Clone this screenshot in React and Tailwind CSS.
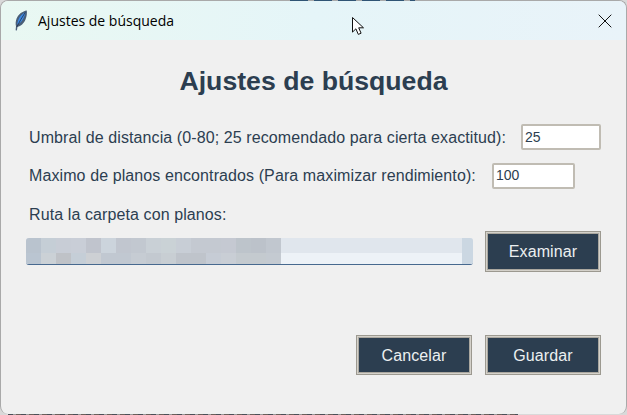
const TOP = ["#b9c3ce","#c5ced6","#c8cdd6","#c9ced7","#c0c4cd","#ccd4dc","#c1c6cf","#c2c8d0","#c9d0d6","#cad2d6","#c8ced6","#c4c9d1","#c4c9d1","#c5c9d2","#bdc4cb","#bcc2ca","#c1c7cf"];
const BOTTOM = ["#bac5d1","#cbd1d6","#bfc2c7","#c5ced7","#cdd0d4","#c1c8d1","#c1c8d1","#c6ccd3","#c3c9d0","#c8ced3","#bfc4cb","#bfc4cb","#c6ccd5","#c9ced5","#c4cacf","#c4cacf","#c4cad1"];

function Bevel({ children, className = "" }) {
  return (
    <button className={`flex items-center justify-center pt-px bg-[#2c3e50] border border-[#9c9990] shadow-[inset_0_0_0_1px_#d4d1ca,inset_0_0_0_2px_#aaa79f] text-[16px] tracking-[0.1px] text-[#ecf0f1] ${className}`}>
      {children}
    </button>
  );
}

function Field({ value, className = "" }) {
  return (
    <div className={`flex items-center h-[26px] bg-white border-2 border-[#c0bcb3] rounded-[2px] pl-[2px] text-[14px] text-[#2c3e50] ${className}`}>
      {value}
    </div>
  );
}

function Feather() {
  return (
    <svg width="14" height="21" viewBox="0 0 14 21">
      <path d="M12.8.4C8.6 1 4.4 4 2.6 8.6 1.6 11.4 1.4 14 2 16.2L1.6 20.2l1.3.2.6-3.6c3.4-.6 6.4-3.6 8-7.4 1.2-3 1.7-6 1.3-9z" fill="#4a5f78" />
      <path d="M11.6 2C8.4 3.6 5.6 6.6 4.2 10.2c-.6 1.6-.9 3.2-.9 4.6 2.6-1.2 5-3.8 6.4-7 .8-2 1.6-3.8 1.9-5.8z" fill="#3d8ae6" />
      <path d="M11.4 2.2C8.4 6.8 5.4 11.6 2.8 17" fill="none" stroke="#1f2f45" strokeWidth=".8" />
    </svg>
  );
}

function Cursor() {
  return (
    <svg width="14" height="20" viewBox="0 0 14 20" className="absolute left-[351px] top-[16px]">
      <path d="M1.5 1.5v14.6l3.4-3.3 2.4 5.6 2.8-1.2-2.4-5.4h4.8z" fill="#fff" stroke="#111" strokeWidth="1" strokeLinejoin="round" />
    </svg>
  );
}

export default function App() {
  return (
    <div className="relative w-[627px] h-[415px] bg-[#d9d9d9] overflow-hidden font-['Liberation_Sans',sans-serif]">
      <div className="h-[414px] flex flex-col rounded-lg bg-[#f0f0f0] border border-[#a9a9a9] border-b-0 overflow-hidden">
        <header className="h-[39px] shrink-0 flex items-center justify-between pl-[13px] pr-[14px] bg-gradient-to-r from-[#e9f8f2] via-[#e5f5f8] to-[#e9f3f9]">
          <div className="flex items-center gap-[10px] text-[14px] text-black font-['Open_Sans',sans-serif]">
            <Feather />
            <span>Ajustes de búsqueda</span>
          </div>
          <svg width="14" height="14" viewBox="0 0 14 14">
            <path d="M.7.7l12.6 12.6M13.3.7L.7 13.3" stroke="#111" strokeWidth="1" fill="none" />
          </svg>
        </header>
        <main className="flex-1 flex flex-col text-[#2c3e50] text-[16px]">
          <h1 className="mt-[26px] text-center text-[26.67px] leading-[30px] font-bold">Ajustes de búsqueda</h1>
          <div className="mt-[28px] pl-[28px] flex items-center h-[26px]">
            <span className="w-[492px] whitespace-nowrap tracking-[0.1px] pt-px">Umbral de distancia (0-80; 25 recomendado para cierta exactitud):</span>
            <Field value="25" className="w-[80px]" />
          </div>
          <div className="mt-[13px] pl-[28px] flex items-center h-[25px]">
            <span className="w-[463px] whitespace-nowrap tracking-[0.1px]">Maximo de planos encontrados (Para maximizar rendimiento):</span>
            <Field value="100" className="w-[83px]" />
          </div>
          <div className="mt-[17px] pl-[28px] h-[18px] leading-[18px] tracking-[0.1px] pt-px">Ruta la carpeta con planos:</div>
          <div className="mt-[8px] pl-[25px] flex items-center gap-[12px] h-[41px]">
            <div className="w-[447px] h-[27px] flex flex-col rounded-[3px] bg-[#e5eaf1] border-b border-[#47698f] overflow-hidden">
              <div className="flex h-[15px] bg-[#e0e6ed]">
                {TOP.map((c, i) => <div key={i} className="w-[15px]" style={{ backgroundColor: c }} />)}
                <div className="flex-1" />
                <div className="w-[11px] bg-[#cbd7e2]" />
              </div>
              <div className="flex flex-1 bg-[#edf2f7]">
                {BOTTOM.map((c, i) => <div key={i} className="w-[15px]" style={{ backgroundColor: c }} />)}
                <div className="flex-1" />
                <div className="w-[11px] bg-[#cbd7e2]" />
              </div>
            </div>
            <Bevel className="w-[116px] h-[41px]">Examinar</Bevel>
          </div>
          <div className="mt-[63px] flex justify-end gap-[13px] pr-[25px]">
            <Bevel className="w-[116px] h-[40px]">Cancelar</Bevel>
            <Bevel className="w-[116px] h-[40px]">Guardar</Bevel>
          </div>
        </main>
      </div>
      <div className="h-px w-[510px] ml-[8px] bg-[repeating-linear-gradient(90deg,#4a4f58_0px,#4a4f58_5px,#9a9a9a_5px,#9a9a9a_8px,#6b5f5a_8px,#6b5f5a_13px)]" />
      <div className="absolute left-[290px] top-0 h-px w-[125px] bg-[repeating-linear-gradient(90deg,#2f5474_0px,#2f5474_18px,#a9a9a9_18px,#a9a9a9_24px)]" />
      <Cursor />
    </div>
  );
}
